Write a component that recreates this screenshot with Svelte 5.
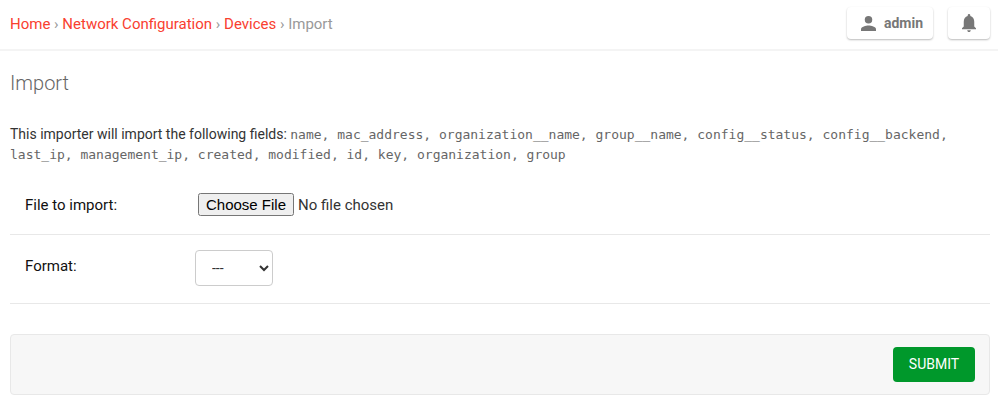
<script>
  const crumbs = ['Home', 'Network Configuration', 'Devices'];
  const fields = 'name, mac_address, organization__name, group__name, config__status, config__backend, last_ip, management_ip, created, modified, id, key, organization, group';
</script>

<div class="page">
  <header>
    <nav>{#each crumbs as crumb}<a href="#top">{crumb}</a>{' › '}{/each}Import</nav>
    <div class="tools">
      <button class="tool account">
        <svg class="user" viewBox="0 0 16 16"><circle cx="8" cy="4" r="4" /><path d="M0 16v-2c0-2.700 5.300-4 8-4s8 1.300 8 4v2z" /></svg>
        <span>admin</span>
      </button>
      <button class="tool bell" aria-label="Notifications">
        <svg viewBox="4 2.5 16 19.5" preserveAspectRatio="none"><path d="M12 22c1.100 0 2-.9 2-2h-4c0 1.100.9 2 2 2zm6-6v-5c0-3.070-1.640-5.640-4.500-6.320V4c0-.83-.67-1.500-1.500-1.500s-1.500.67-1.500 1.500v.68C7.630 5.360 6 7.920 6 11v5l-2 2v1h16v-1l-2-2z" /></svg>
      </button>
    </div>
  </header>
  <main>
    <h1>Import</h1>
    <form onsubmit={(e) => e.preventDefault()}>
      <p>This importer will import the following fields: <code>{fields}</code></p>
      <div class="row file">
        <label for="file">File to import:</label>
        <input id="file" type="file" />
      </div>
      <div class="row format">
        <label for="format">Format:</label>
        <select id="format"><option>---</option></select>
      </div>
      <div class="submit-row"><button class="submit">SUBMIT</button></div>
    </form>
  </main>
</div>

<style>
  :global(body) { margin: 0; background: #fff; }
  .page { height: 404px; overflow: hidden; font-family: Roboto, sans-serif; font-size: 14px; color: #333; }
  .page * { box-sizing: border-box; }
  header { height: 51px; border-bottom: 2px solid #f4f4f4; display: flex; justify-content: space-between; padding: 0 8px 0 10px; }
  nav { font-size: 15px; line-height: 18px; padding-top: 15px; color: #999; }
  a { color: #f9402f; text-decoration: none; }
  .tools { display: flex; gap: 15px; padding-top: 7px; }
  .tool { display: flex; align-items: center; height: 32px; border: 0; border-radius: 4px; background: #fff; color: #777; box-shadow: 0 1px 2px rgba(0, 0, 0, .27); padding: 0; }
  .tool svg { fill: #777; display: block; }
  .account { width: 86px; padding-left: 14px; font: 700 14px/18px Roboto, sans-serif; }
  .user { width: 15px; height: 15px; margin-right: 8px; }
  .bell { width: 42px; justify-content: center; }
  .bell svg { width: 14px; height: 18px; }
  main { padding: 0 8px 0 10px; }
  h1 { margin: 0; padding-top: 20px; font-size: 20px; font-weight: 300; line-height: 24px; color: #666; }
  p { margin: 29px 0 0; line-height: 20px; }
  code { font: 13px/16px "DejaVu Sans Mono", monospace; color: #666; }
  .row { display: flex; border-bottom: 1px solid #e8e8e8; padding-left: 15px; }
  label { font-size: 15px; line-height: 18px; color: #111; }
  .file { height: 71px; padding-top: 29px; }
  .file label { padding-top: 3px; width: 173px; }
  input { font: 15px/18px Roboto, sans-serif; color: #333; height: 23px; padding: 0; width: 300px; }
  input::file-selector-button { font: 15px/17px "Liberation Sans", Arial, sans-serif; height: 23px; }
  .format { height: 69px; padding-top: 15px; }
  .format label { padding-top: 7px; width: 170px; }
  select { width: 78px; height: 36px; border: 1px solid #ccc; border-radius: 4px; background: #fff; color: #333; font: 14px/18px Roboto, sans-serif; padding: 0 0 0 12px; }
  .submit-row { margin-top: 30px; height: 61px; border: 1px solid #e8e8e8; border-radius: 4px; background: #f7f7f7; display: flex; align-items: center; justify-content: flex-end; padding-right: 14px; }
  .submit { width: 82px; height: 35px; border: 0; border-radius: 4px; background: #00982b; color: #fff; font: 14px/18px Roboto, sans-serif; padding: 0 0 2px; }
</style>
